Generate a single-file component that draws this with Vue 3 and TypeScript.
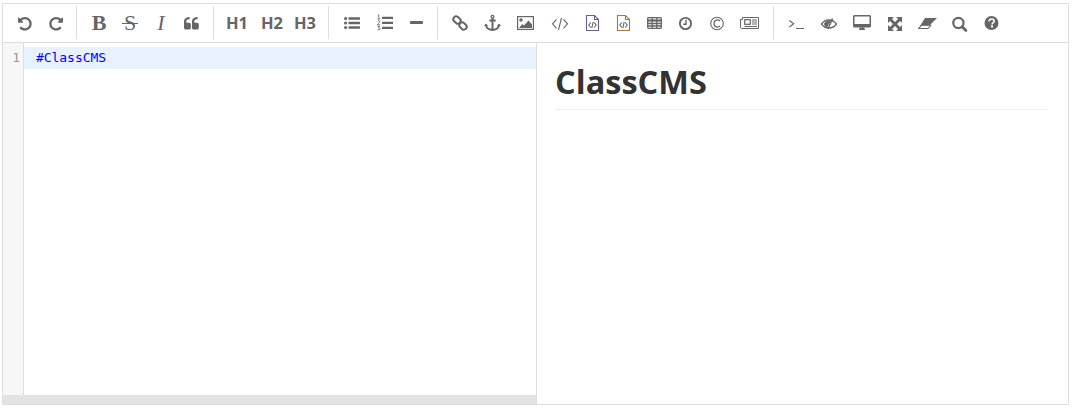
<script setup lang="ts">
interface Tool { id: string; c: number; label?: string; kind?: string }
interface Group { sep?: number; tools: Tool[] }
const TOOL_W = 30
const groupsRaw: Group[] = [
  { tools: [{ id: 'undo', c: 25 }, { id: 'redo', c: 56 }] },
  { sep: 76, tools: [
    { id: 'b', c: 99, label: 'B', kind: 'serif bold' },
    { id: 's', c: 130, label: 'S', kind: 'serif strike' },
    { id: 'i', c: 161, label: 'I', kind: 'serif italic' },
    { id: 'quote', c: 191 },
  ] },
  { sep: 213, tools: [
    { id: 'h1', c: 237, label: 'H1', kind: 'head' },
    { id: 'h2', c: 272, label: 'H2', kind: 'head' },
    { id: 'h3', c: 305, label: 'H3', kind: 'head' },
  ] },
  { sep: 328, tools: [{ id: 'ul', c: 352 }, { id: 'ol', c: 385 }, { id: 'hr', c: 416 }] },
  { sep: 437, tools: [
    { id: 'link', c: 460 }, { id: 'anchor', c: 492 }, { id: 'image', c: 526 }, { id: 'code', c: 560 },
    { id: 'filea', c: 592 }, { id: 'fileb', c: 623 }, { id: 'table', c: 654 }, { id: 'clock', c: 686 },
    { id: 'copy', c: 716 }, { id: 'news', c: 750 },
  ] },
  { sep: 773, tools: [
    { id: 'term', c: 796 }, { id: 'eye', c: 828 }, { id: 'desktop', c: 862 }, { id: 'expand', c: 894 },
    { id: 'eraser', c: 927 }, { id: 'search', c: 960 }, { id: 'help', c: 991 },
  ] },
]

// Turn each button's centre into the leading gap it needs in the flex row.
let cursor = 3
const groups = groupsRaw.map((g) => {
  let sepGap = 0
  if (g.sep !== undefined) {
    sepGap = g.sep - cursor
    cursor = g.sep + 1
  }
  const tools = g.tools.map((t) => {
    const gap = t.c - TOOL_W / 2 - cursor
    cursor = t.c + TOOL_W / 2
    return { ...t, gap }
  })
  return { hasSep: g.sep !== undefined, sepGap, tools }
})
const undoPath = 'M1664 896q0 156-61 298t-164 245-245 164-298 61q-172 0-327-72.500T305 1387q-7-10-6.500-22.500T307 1344l137-138q10-9 25-9 16 2 23 12 73 95 179 147t225 52q104 0 198.500-40.500T1258 1258t109.500-163.500T1408 896t-40.500-198.500T1258 534t-163.500-109.500T896 384q-98 0-188 35.500T548 521l137 138q31 30 14 69-17 40-59 40H192q-26 0-45-19t-19-45V256q0-42 40-59 39-17 69 14l130 129q107-101 244.500-156.500T896 128q156 0 298 61t245 164 164 245 61 298z'
</script>

<template>
  <div class="editor">
    <div class="toolbar">
      <template v-for="(g, gi) in groups" :key="gi">
        <span v-if="g.hasSep" class="sep" :style="{ marginLeft: g.sepGap + 'px' }"></span>
        <span v-for="t in g.tools" :key="t.id" class="tool" :class="t.kind" :style="{ marginLeft: t.gap + 'px' }">
          <template v-if="t.label">{{ t.label }}</template>
          <svg v-else viewBox="0 0 20 20" width="20" height="20">
            <path v-if="t.id === 'undo'" transform="translate(1.9 2.8) scale(.0089)" fill="currentColor" :d="undoPath" />
            <path v-else-if="t.id === 'redo'" transform="translate(18.100 2.800) scale(-.0089 .0089)" fill="currentColor" :d="undoPath" />
            <path v-else-if="t.id === 'quote'" transform="translate(3 2.900) scale(.0089)" fill="currentColor" d="M768 960v384q0 80-56 136t-136 56H192q-80 0-136-56T0 1344V640q0-104 40.500-198.500T150 278t163.500-109.500T512 128h64q26 0 45 19t19 45v128q0 26-19 45t-45 19h-64q-106 0-181 75t-75 181v32q0 40 28 68t68 28h224q80 0 136 56t56 136zm896 0v384q0 80-56 136t-136 56h-384q-80 0-136-56t-56-136V640q0-104 40.500-198.500T1046 278t163.500-109.500T1408 128h64q26 0 45 19t19 45v128q0 26-19 45t-45 19h-64q-106 0-181 75t-75 181v32q0 40 28 68t68 28h224q80 0 136 56t56 136z" />
            <g v-else-if="t.id === 'ul'" fill="currentColor">
              <circle cx="3.600" cy="5.500" r="1.600" /><circle cx="3.600" cy="10" r="1.600" /><circle cx="3.600" cy="14.500" r="1.600" />
              <rect x="6.500" y="4.300" width="11.500" height="2.400" rx=".4" /><rect x="6.500" y="8.800" width="11.500" height="2.400" rx=".4" /><rect x="6.500" y="13.300" width="11.500" height="2.400" rx=".4" />
            </g>
            <g v-else-if="t.id === 'ol'">
              <g fill="currentColor">
                <rect x="7" y="3.800" width="11" height="2.200" rx=".3" /><rect x="7" y="8.800" width="11" height="2.200" rx=".3" /><rect x="7" y="13.800" width="11" height="2.200" rx=".3" />
              </g>
              <path d="M2.800 2.300l1-.5v4M2.500 6h2.600M2.400 8.300c.3-1 2.600-.8 2.400.5-.2.900-2.300 1.600-2.400 3h2.700M2.500 13.300h2.300l-1.200 1.500c1 0 1.500.4 1.500 1.100 0 1-1.700 1.300-2.600.7" fill="none" stroke="currentColor" stroke-width=".9" />
            </g>
            <rect v-else-if="t.id === 'hr'" x="4" y="8" width="13" height="3" rx=".7" fill="currentColor" />
            <g v-else-if="t.id === 'link'" fill="none" stroke="currentColor" stroke-width="2">
              <rect x="3" y="4.200" width="8" height="5.600" rx="2.800" transform="rotate(42 7 7)" />
              <rect x="9" y="10.200" width="8" height="5.600" rx="2.800" transform="rotate(42 13 13)" />
            </g>
            <g v-else-if="t.id === 'anchor'">
              <g fill="none" stroke="currentColor">
                <circle cx="10.500" cy="3.800" r="1.400" stroke-width="1.300" />
                <path d="M10.500 5v12.500M7.300 7.500h6.400" stroke-width="2" />
                <path d="M4 11.500c0 3.600 3 5.200 6.500 5.500 3.500-.3 6.500-1.900 6.500-5.500" stroke-width="1.900" />
              </g>
              <path d="M2 13l2-2.500L6 13zM15 13l2-2.500 2 2.500z" fill="currentColor" />
            </g>
            <g v-else-if="t.id === 'image'">
              <rect x="1.600" y="3.600" width="15.800" height="12.800" fill="none" stroke="currentColor" stroke-width="1.200" />
              <circle cx="5" cy="7" r="1.700" fill="currentColor" />
              <path d="M3 15h13v-3.500L12.500 7.500 8 12.500 6.300 11z" fill="currentColor" />
            </g>
            <path v-else-if="t.id === 'code'" d="M6.500 6.500L2.500 11l4 4.500M13.500 6.500l4 4.500-4 4.500M11.500 5l-3 12" transform="translate(0 -.2)" fill="none" stroke="currentColor" stroke-width="1.100" />
            <g v-else-if="t.id === 'filea' || t.id === 'fileb'" fill="none" stroke-width="1.100">
              <path d="M4.500 2.500h8l4 4v11h-12zM12.500 2.500v4h4" :stroke="t.id === 'filea' ? '#6b5b85' : '#a27a3c'" />
              <path d="M8.800 9.500L6.800 12l2 2.500M12.200 9.500l2 2.500-2 2.500M11.200 8.800L9.800 15.200" stroke="#666" />
            </g>
            <g v-else-if="t.id === 'table'" fill="none" stroke="currentColor" stroke-width="1.300">
              <rect x="3.700" y="4.700" width="13.600" height="10.600" rx=".8" />
              <path d="M3.700 7.500h13.600" stroke-width="2.200" /><path d="M3.700 10.500h13.600M3.700 13h13.600M8.200 5v10M12.800 5v10" />
            </g>
            <g v-else-if="t.id === 'clock'" fill="none" stroke="currentColor" stroke-width="1.900">
              <circle cx="9.500" cy="10.500" r="5.600" /><path d="M10 6.800v4.400H7.200" stroke-width="1.400" />
            </g>
            <g v-else-if="t.id === 'copy'" fill="none" stroke="currentColor" stroke-width="1.100">
              <circle cx="11" cy="10.500" r="6.300" /><path d="M14 8.200C12.500 6.200 8 6.500 8 10.500s4.500 4.300 6 2.300" stroke-width="1.200" />
            </g>
            <g v-else-if="t.id === 'news'" fill="none" stroke="currentColor" stroke-width="1">
              <path d="M2.500 4.500h16v11h-16.500c-1 0-1.500-.7-1.500-1.500V6.500h2z" />
              <rect x="4.700" y="6.700" width="5.600" height="4.600" stroke-width="1.200" />
              <path d="M12 7h5M12 9h5M12 11h5M4.500 13.500h12.500" />
            </g>
            <path v-else-if="t.id === 'term'" d="M3.300 7.400l4.500 3.300-4.500 3.300M10 15.500h8" fill="none" stroke="currentColor" stroke-width="1.200" />
            <g v-else-if="t.id === 'eye'">
              <path d="M3.500 11C5.500 8.300 8.300 7 11 7c2.500 0 5.200 1.300 7.500 4-2 2.800-4.800 4-7.500 4-2.700 0-5.500-1.200-7.500-4z" fill="none" stroke="currentColor" stroke-width="1.300" />
              <path d="M5.800 11C7 8.500 9.500 7.500 13 7.500l-4 7C7.500 14 6.500 12.500 5.800 11z" fill="currentColor" />
              <path d="M14.500 5.500L10 16" stroke="currentColor" stroke-width="1.500" />
            </g>
            <g v-else-if="t.id === 'desktop'" fill="currentColor">
              <path fill-rule="evenodd" d="M2.500 2h15c.8 0 1.500.7 1.500 1.500V13c0 .8-.7 1.500-1.500 1.500h-15C1.700 14.500 1 13.800 1 13V3.500C1 2.700 1.700 2 2.500 2zM2.500 3.500v7.500h15V3.500z" />
              <path d="M7.500 14.500h5V16l1 1h-7l1-1z" />
            </g>
            <path v-else-if="t.id === 'expand'" d="M4 4h6L8 6l3 3 3-3-2-2h6v6l-2-2-3 3 3 3 2-2v6h-6l2-2-3-3-3 3 2 2H4v-6l2 2 3-3-3-3-2 2z" fill="currentColor" />
            <g v-else-if="t.id === 'eraser'" stroke-linejoin="round">
              <path d="M8 5h12l-8 8H3z" fill="currentColor" />
              <path d="M1.500 15.500h9.500l3-3.300H4.500z" fill="#fff" stroke="currentColor" stroke-width="1.100" />
            </g>
            <g v-else-if="t.id === 'search'" fill="none" stroke="currentColor">
              <circle cx="8.400" cy="10" r="5.100" stroke-width="2.200" /><path d="M12.200 13.800l3.700 3.700" stroke-width="2.800" stroke-linecap="round" />
            </g>
            <g v-else-if="t.id === 'help'">
              <circle cx="10.500" cy="10" r="7" fill="currentColor" />
              <path d="M8 8.300C8.300 6.700 9.300 6 10.600 6c1.500 0 2.500.9 2.500 2.100 0 1.700-2 1.800-2 3.300" fill="none" stroke="#fff" stroke-width="1.700" />
              <rect x="10" y="12.400" width="2" height="2" fill="#fff" />
            </g>
          </svg>
        </span>
      </template>
    </div>
    <div class="panes">
      <div class="source">
        <div class="body">
          <div class="gutter"><div class="num">1</div></div>
          <div class="code"><div class="line">#ClassCMS</div></div>
        </div>
        <div class="hscroll"></div>
      </div>
      <div class="preview">
        <h1>ClassCMS</h1>
      </div>
    </div>
  </div>
</template>

<style>
html, body { margin: 0; background: #fff; }
</style>

<style scoped>
.editor {
  box-sizing: border-box;
  width: 1067px;
  height: 402px;
  margin: 3px 0 0 2px;
  border: 1px solid #ddd;
  display: flex;
  flex-direction: column;
  background: #fff;
}
.toolbar {
  box-sizing: border-box;
  height: 39px;
  flex: none;
  border-bottom: 1px solid #ddd;
  padding-top: 2px;
  display: flex;
  align-items: flex-start;
}
.sep { width: 1px; height: 33px; background: #ddd; flex: none; }
.tool {
  box-sizing: border-box;
  flex: none;
  width: 30px;
  height: 34px;
  display: flex;
  align-items: center;
  justify-content: center;
  color: #666;
  position: relative;
}
.serif { font-family: "Liberation Serif", serif; font-size: 22px; }
.bold { font-weight: 700; }
.italic { font-style: italic; }
.strike::after {
  content: "";
  position: absolute;
  left: 7px;
  right: 7px;
  top: 17px;
  height: 1px;
  background: #666;
}
.head {
  font-family: "Open Sans", sans-serif;
  font-weight: 700;
  font-size: 16.500px;
  padding-bottom: 2px;
}
.panes { flex: 1; display: flex; min-height: 0; }
.source {
  box-sizing: border-box;
  width: 534px;
  flex: none;
  border-right: 1px solid #ddd;
  display: flex;
  flex-direction: column;
}
.body { flex: 1; display: flex; min-height: 0; }
.gutter {
  box-sizing: border-box;
  width: 21px;
  flex: none;
  background: #f7f7f7;
  border-right: 1px solid #ddd;
  padding-top: 4px;
}
.num {
  text-align: right;
  padding-right: 3px;
  font: 13px/22px "DejaVu Sans Mono", monospace;
  color: #999;
}
.code { flex: 1; padding-top: 4px; min-width: 0; }
.line {
  height: 22px;
  line-height: 22px;
  background: #e8f2ff;
  padding-left: 12px;
  font-family: "DejaVu Sans Mono", monospace;
  font-size: 13px;
  letter-spacing: -0.05px;
  color: #00f;
}
.hscroll { height: 9px; flex: none; background: #e3e3e3; }
.preview { flex: 1; padding: 0 20px 0 19px; min-width: 0; }
h1 {
  margin: 17px 0 0;
  padding-bottom: 6px;
  border-bottom: 1px solid #eee;
  font-family: "Open Sans", sans-serif;
  font-weight: 700;
  font-size: 32.500px;
  line-height: 43px;
  text-indent: -1px;
  color: #333;
}
</style>
